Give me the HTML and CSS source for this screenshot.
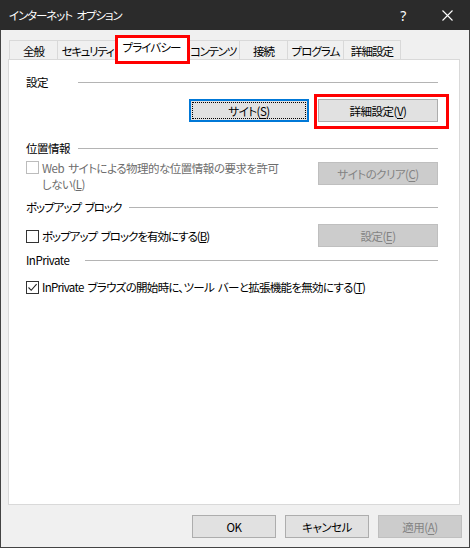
FILE: index.html
```html
<!DOCTYPE html>
<html lang="ja">
<head>
<meta charset="utf-8">
<title>インターネット オプション</title>
<link rel="stylesheet" href="styles.css">
</head>
<body>
<div class="window">
  <div class="titlebar">
    <span class="title">インターネット オプション</span>
    <div class="caption-buttons">
      <span class="cap-btn help">?</span>
      <span class="cap-btn close">
        <svg width="11" height="11" viewBox="0 0 11 11"><path d="M0.5 0.5 L10.5 10.5 M10.5 0.5 L0.5 10.5" stroke="#ffffff" stroke-width="1.1" fill="none"/></svg>
      </span>
    </div>
  </div>
  <div class="client">
    <div class="tabs">
      <div class="tab w48">全般</div>
      <div class="tab w60 tight">セキュリティ</div>
      <div class="tab w69 selected">プライバシー</div>
      <div class="tab w53 tight">コンテンツ</div>
      <div class="tab w48">接続</div>
      <div class="tab w56">プログラム</div>
      <div class="tab w57 last">詳細設定</div>
    </div>
    <div class="panel">
      <div class="group-title g-settings"><span class="gt-label">設定</span><span class="rule"></span></div>
      <div class="row-buttons">
        <button class="btn focused">サイト(<u>S</u>)</button>
        <button class="btn">詳細設定(<u>V</u>)</button>
      </div>

      <div class="group-title g-location"><span class="gt-label">位置情報</span><span class="rule"></span></div>
      <div class="option-row row-location">
        <div class="check disabled">
          <span class="box"></span>
          <span class="check-text">Web サイトによる物理的な位置情報の要求を許可<br>しない(<u>L</u>)</span>
        </div>
        <button class="btn disabled">サイトのクリア(<u>C</u>)</button>
      </div>

      <div class="group-title g-popup"><span class="gt-label">ポップアップ ブロック</span><span class="rule"></span></div>
      <div class="option-row row-popup">
        <div class="check">
          <span class="box"></span>
          <span class="check-text">ポップアップ ブロックを有効にする(<u>B</u>)</span>
        </div>
        <button class="btn disabled">設定(<u>E</u>)</button>
      </div>

      <div class="group-title g-inprivate"><span class="gt-label">InPrivate</span><span class="rule"></span></div>
      <div class="option-row row-inprivate">
        <div class="check">
          <span class="box checked">
            <svg width="11" height="11" viewBox="0 0 11 11"><path d="M1.5 5.5 L4.2 8.3 L9.6 2.2" stroke="#222" stroke-width="1.1" fill="none"/></svg>
          </span>
          <span class="check-text">InPrivate ブラウズの開始時に、ツール バーと拡張機能を無効にする(<u>T</u>)</span>
        </div>
      </div>
    </div>
    <div class="footer">
      <button class="btn footer-btn">OK</button>
      <button class="btn footer-btn">キャンセル</button>
      <button class="btn footer-btn disabled">適用(<u>A</u>)</button>
    </div>
  </div>
  <div class="annot annot-tab"></div>
  <div class="annot annot-btn"></div>
</div>
</body>
</html>
```

FILE: styles.css
```css
* { box-sizing: border-box; }

html, body {
  margin: 0;
  padding: 0;
  background: #ffffff;
}

body {
  font-family: "Noto Sans CJK JP", "Noto Sans", sans-serif;
  font-size: 11.5px;
  letter-spacing: -0.5px;
  word-spacing: 2px;
  font-feature-settings: "palt";
  color: #000;
}

.window {
  position: relative;
  width: 470px;
  height: 548px;
  background: #f0f0f0;
  border: 1px solid #434343;
  border-top: none;
  display: flex;
  flex-direction: column;
}

.titlebar {
  height: 30px;
  margin: 0 -1px;
  background: #2b2b2b;
  color: #ffffff;
  display: flex;
  align-items: center;
  justify-content: space-between;
  padding-left: 9px;
  flex-shrink: 0;
}

.title {
  line-height: 16px;
  letter-spacing: -1.1px;
  word-spacing: 3px;
}

.caption-buttons {
  display: flex;
  height: 30px;
}

.cap-btn {
  width: 46px;
  height: 30px;
  display: flex;
  align-items: center;
  justify-content: center;
}

.help {
  font-family: "Noto Sans", sans-serif;
  font-size: 14px;
  padding-left: 4px;
}

.client {
  flex: 1;
  padding: 10px 9px 0 7px;
  display: flex;
  flex-direction: column;
}

.tabs {
  display: flex;
  align-items: flex-end;
  height: 19px;
  margin-left: 1px;
}

.tab {
  height: 19px;
  border-top: 1px solid #d9d9d9;
  border-left: 1px solid #d9d9d9;
  background: #f0f0f0;
  display: flex;
  align-items: center;
  justify-content: center;
  line-height: 16px;
  white-space: nowrap;
  padding-top: 1px;
  letter-spacing: -0.9px;
  overflow: hidden;
}

.tab.tight { letter-spacing: -1.3px; }

.tab.last { border-right: 1px solid #d9d9d9; }

.w48 { width: 48px; }
.w53 { width: 53px; }
.w56 { width: 56px; }
.w57 { width: 58px; }
.w60 { width: 60px; }
.w69 { width: 69px; }

.tab.selected {
  width: 73px;
  height: 24px;
  margin: 0 -2px -1px;
  background: #ffffff;
  border: 1px solid #d9d9d9;
  border-bottom: none;
  position: relative;
  z-index: 1;
  padding-top: 0;
  padding-bottom: 3px;
  overflow: visible;
}

.panel {
  width: 452px;
  height: 446px;
  background: #ffffff;
  border: 1px solid #d9d9d9;
  padding: 14px 21px 0 17px;
  display: flex;
  flex-direction: column;
}

.group-title {
  display: flex;
  align-items: center;
  height: 16px;
  line-height: 16px;
}

.gt-label { white-space: nowrap; }

.g-settings .gt-label { width: 52px; }
.g-location .gt-label { width: 52px; }
.g-popup .gt-label { width: 103px; letter-spacing: -1px; }
.g-inprivate .gt-label { width: 59px; }

.rule {
  flex: 1;
  height: 1px;
  background: #b4b4b4;
  margin-top: 1px;
}

.row-buttons {
  margin-top: 9px;
  display: flex;
  justify-content: flex-end;
  gap: 9px;
}

.btn {
  font-family: inherit;
  font-size: inherit;
  letter-spacing: inherit;
  word-spacing: inherit;
  font-feature-settings: "palt";
  color: #000;
  width: 120px;
  height: 23px;
  background: #e1e1e1;
  border: 1px solid #adadad;
  border-radius: 0;
  padding: 0;
  margin: 0;
  line-height: 16px;
  position: relative;
}

.btn u { text-underline-offset: 2px; }

.btn.focused {
  border: 2px solid #0078d7;
}

.btn.focused::after {
  content: "";
  position: absolute;
  inset: 1px;
  border: 1px dotted #000;
}

.btn.disabled {
  background: #cccccc;
  border-color: #bfbfbf;
  color: #838383;
}

.g-location { margin-top: 18px; }
.g-popup { margin-top: 7px; }
.g-inprivate { margin-top: 5px; }

.option-row {
  display: flex;
  justify-content: space-between;
}

.row-location {
  margin-top: 4px;
  align-items: flex-start;
}

.row-location .btn { margin-top: 2px; }

.row-popup {
  margin-top: 9px;
  align-items: center;
}

.row-popup .check-text { letter-spacing: -1px; }

.row-inprivate {
  margin-top: 11px;
}

.row-inprivate .check-text { letter-spacing: -0.7px; }

.check {
  display: flex;
  align-items: flex-start;
  gap: 3px;
}

.row-popup .check { align-items: center; }

.check-text {
  line-height: 16px;
  white-space: nowrap;
}

.check.disabled .check-text { color: #6d6d6d; }

.box {
  width: 13px;
  height: 13px;
  border: 1px solid #333333;
  background: #ffffff;
  flex-shrink: 0;
  margin-top: 2px;
  display: flex;
  align-items: center;
  justify-content: center;
}

.row-location .box { margin-top: 1px; }
.row-popup .box { margin-top: 2px; }

.check.disabled .box { border-color: #bcbcbc; }

.footer {
  margin-top: 10px;
  display: flex;
  justify-content: flex-end;
  gap: 9px;
  margin-right: -2px;
}

.footer-btn { width: 84px; }

.annot {
  position: absolute;
  border: 3px solid #ff0000;
  z-index: 5;
  pointer-events: none;
}

.annot-tab {
  left: 114px;
  top: 35px;
  width: 75px;
  height: 29px;
}

.annot-btn {
  left: 313px;
  top: 94px;
  width: 135px;
  height: 35px;
}
```
